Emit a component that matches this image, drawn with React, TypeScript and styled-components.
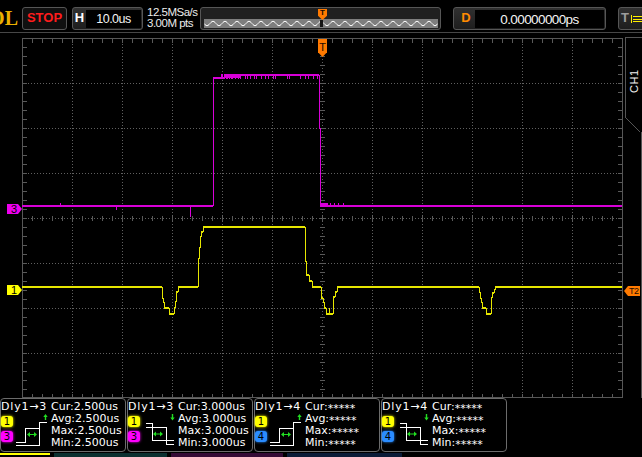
import styled, { createGlobalStyle } from "styled-components";

const GlobalStyle = createGlobalStyle`
  html, body { margin: 0; padding: 0; background: #000; }
  body { font-family: "Liberation Sans", Arial, sans-serif; }
`;

const Screen = styled.div`
  width: 642px;
  height: 457px;
  background: #000;
  color: #fff;
  overflow: hidden;
`;

/* ---------- top status bar ---------- */

const TopBar = styled.div`
  display: flex;
  align-items: flex-start;
  height: 33px;
  box-sizing: border-box;
  padding-top: 7px;
  border-bottom: 1px solid #474747;
`;

const Logo = styled.div`
  flex: none;
  width: 18px;
  height: 23px;
  overflow: hidden;
  display: flex;
  justify-content: flex-end;
  align-items: center;
  font-family: "Liberation Serif", serif;
  font-weight: 700;
  font-size: 20px;
  color: #ecb000;
  white-space: nowrap;
`;

const Box = styled.div<{ $w: number; $ml: number }>`
  flex: none;
  position: relative;
  width: ${(p) => p.$w}px;
  height: 23px;
  margin-left: ${(p) => p.$ml}px;
  box-sizing: border-box;
  border: 1px solid #565656;
  border-radius: 3px;
  background: linear-gradient(#303030, #1e1e1e);
  display: flex;
  align-items: center;
  overflow: hidden;
`;

const StopBox = styled(Box)`
  justify-content: center;
  padding-bottom: 3px;
  background: #101010;
  color: #ff1c1c;
  font-weight: 700;
  font-size: 13px;
`;

const BoxLabel = styled.span<{ $color: string; $w: number; $pad?: number }>`
  flex: none;
  width: ${(p) => p.$w}px;
  padding-left: ${(p) => p.$pad ?? 0}px;
  padding-bottom: 2px;
  box-sizing: border-box;
  text-align: center;
  font-weight: 700;
  font-size: 13px;
  color: ${(p) => p.$color};
`;

const Field = styled.div<{ $size: number; $ls: number }>`
  flex: 1;
  height: 18px;
  margin: 1px 1px 0 0;
  background: #000;
  display: flex;
  align-items: center;
  justify-content: center;
  font-size: ${(p) => p.$size}px;
  letter-spacing: ${(p) => p.$ls}px;
  color: #f4f4f4;
`;

const SampleInfo = styled.div`
  flex: none;
  width: 50px;
  margin-left: 4px;
  font-size: 11.5px;
  line-height: 10.7px;
  letter-spacing: -0.5px;
  color: #ececec;
  white-space: nowrap;
`;

const MemBox = styled(Box)`
  align-items: flex-end;
  padding: 0 2px 1px 3px;
  background: #202020;
`;

const MemStrip = styled.svg`
  display: block;
  width: 234px;
  height: 9px;
  background: #7e7e7e;
`;

const MemTrig = styled.div`
  position: absolute;
  left: 117px;
  top: 1px;
  width: 9px;
  height: 11px;
  background: #ff7a00;
  clip-path: polygon(0 0, 100% 0, 100% 62%, 50% 100%, 0 62%);
  color: #1a0a00;
  font-size: 8px;
  font-weight: 700;
  line-height: 8px;
  text-align: center;
`;

/* ---------- plot region ---------- */

const Middle = styled.div`
  display: flex;
  height: 365px;
`;

const Plot = styled.div`
  position: relative;
  flex: none;
  width: 625px;
  padding: 5px 0 0 22px;
  box-sizing: border-box;
`;

const Scope = styled.svg`
  display: block;
  overflow: visible;
`;

const ChMarker = styled.div<{ $color: string; $top: number }>`
  position: absolute;
  left: 7px;
  top: ${(p) => p.$top}px;
  width: 15px;
  height: 10px;
  box-sizing: border-box;
  padding-left: 4px;
  background: ${(p) => p.$color};
  clip-path: polygon(0 0, 11px 0, 15px 50%, 11px 100%, 0 100%);
  color: #000;
  font-size: 11px;
  line-height: 10px;
`;

const TopTrig = styled.div`
  position: absolute;
  left: 318px;
  top: 6px;
  width: 9px;
  height: 18px;
  background: #ff7a00;
  clip-path: polygon(0 0, 100% 0, 100% 74%, 50% 100%, 0 74%);
  color: #1a0a00;
  font-size: 11px;
  line-height: 17px;
  text-align: center;
`;

const SideTrig = styled.div`
  position: absolute;
  left: 624px;
  top: 253px;
  width: 16px;
  height: 10px;
  box-sizing: border-box;
  padding-left: 5px;
  background: #ff7a00;
  clip-path: polygon(0 50%, 4px 0, 100% 0, 100% 100%, 4px 100%);
  color: #1a0a00;
  font-size: 9px;
  line-height: 10px;
  letter-spacing: -0.5px;
`;

const SideTab = styled.div`
  flex: none;
  width: 17px;
  margin-top: 4px;
  display: flex;
  flex-direction: column;
`;

const TabHead = styled.div`
  height: 80px;
  box-sizing: border-box;
  border-top: 1px solid #555;
  border-left: 1px solid #555;
  display: flex;
  justify-content: center;
  padding-top: 30px;
`;

const TabText = styled.span`
  writing-mode: vertical-rl;
  transform: rotate(180deg);
  font-size: 11px;
  letter-spacing: 0.5px;
  color: #f0f0f0;
  height: 25px;
`;

const TabBevel = styled.div`
  width: 15px;
  height: 15px;
  background: linear-gradient(
    to top right,
    transparent calc(50% - 0.7px),
    #555 50%,
    transparent calc(50% + 0.7px)
  );
`;

const TabRail = styled.div`
  flex: 1;
  width: 16px;
  border-right: 1px solid #555;
`;

/* ---------- measurement panels ---------- */

const MeasureRow = styled.div`
  display: flex;
  gap: 1px;
  height: 54px;
`;

const Panel = styled.div`
  flex: none;
  position: relative;
  z-index: 1;
  width: 126px;
  height: 54px;
  box-sizing: border-box;
  border: 1px solid #6c6c6c;
  border-radius: 4px;
  background: #000;
  display: grid;
  grid-template-columns: 50px 1fr;
  font-family: "DejaVu Sans", sans-serif;
  font-size: 11px;
  color: #fff;
`;

const Left = styled.div`
  display: flex;
  flex-direction: column;
  padding-top: 1.5px;
`;

const DlyLabel = styled.div`
  height: 12px;
  line-height: 12px;
  white-space: nowrap;
  letter-spacing: 0.8px;
`;

const Diagram = styled.div`
  display: flex;
`;

const Badges = styled.div`
  flex: none;
  width: 14px;
  display: flex;
  flex-direction: column;
  gap: 4px;
  padding-top: 3.5px;
`;

const Badge = styled.div<{ $c: string }>`
  width: 12px;
  height: 11px;
  border-radius: 3px;
  background: ${(p) => p.$c};
  box-shadow: 0 0 3px ${(p) => p.$c};
  color: #000;
  font-size: 10px;
  line-height: 11px;
  text-align: center;
`;

const Values = styled.div`
  padding-top: 1.5px;
  line-height: 12.2px;
  white-space: nowrap;
`;

const Stars = styled.span`
  position: relative;
  top: 2px;
`;

const TabStrip = styled.div`
  display: flex;
  height: 4px;
  margin-top: 1px;
`;

const ChTab = styled.div<{ $w: number; $ml: number; $bg: string; $line?: string }>`
  flex: none;
  width: ${(p) => p.$w}px;
  margin-left: ${(p) => p.$ml}px;
  background: ${(p) => p.$bg};
  border-top: 2px solid ${(p) => p.$line ?? p.$bg};
`;

/* ---------- drawings ---------- */

type Pt = [number, number];
const OX = 22;
const OY = 38;

function segs(pts: Pt[]) {
  let h = "";
  let v = "";
  for (let i = 1; i < pts.length; i++) {
    const [x0, y0] = pts[i - 1];
    const [x1, y1] = pts[i];
    if (y0 === y1) h += `M${x0 - OX},${y0 - OY}H${x1 - OX}`;
    else v += `M${x0 - OX + 0.5},${y0 - OY}V${y1 - OY}`;
  }
  return { h, v };
}

function ticks(list: [number, number, number][]) {
  return list.map(([x, a, b]) => `M${x - OX + 0.5},${a - OY}V${b - OY}`).join("");
}

const ch1: Pt[] = [
  [22, 287], [162, 287], [162, 298], [163, 298], [163, 302], [164, 302], [164, 308],
  [169, 308], [169, 314], [174, 314], [174, 308], [175, 308], [175, 302], [176, 302],
  [176, 292], [178, 292], [178, 287], [198, 287], [198, 259], [199, 259], [199, 248],
  [200, 248], [200, 237], [201, 237], [201, 232], [203, 232], [203, 227], [305, 227],
  [305, 261], [306, 261], [306, 275], [309, 275], [309, 281], [312, 281], [312, 287],
  [321, 287], [321, 298], [323, 298], [323, 302], [324, 302], [324, 308], [326, 308],
  [326, 314], [333, 314], [333, 297], [335, 297], [335, 292], [337, 292], [337, 287],
  [479, 287], [479, 292], [480, 292], [480, 298], [481, 298], [481, 302], [482, 302],
  [482, 308], [486, 308], [486, 314], [491, 314], [491, 298], [492, 298], [492, 293],
  [494, 293], [494, 290], [495, 290], [495, 287], [622, 287],
];

const ch3: Pt[] = [
  [22, 206], [213, 206], [213, 78], [225, 78], [225, 75], [319, 75], [319, 128],
  [320, 128], [320, 206], [622, 206],
];

const ch3Noise: [number, number, number][] = [
  [60, 203, 206], [116, 206, 210], [190, 206, 217],
  ...[221, 222, 224, 226, 227, 229, 231, 232, 235, 238, 240, 245, 247, 250, 254, 256,
    261, 265, 268, 273, 275, 287, 289, 300, 305, 308, 313, 317].map(
    (x) => [x, 74, 79] as [number, number, number]
  ),
  [330, 203, 206], [334, 203, 206], [338, 203, 206], [343, 203, 206],
  [329, 314, 308],
];

function Graticule() {
  const W = 600;
  const H = 360;
  const dots: string[] = [];
  for (let k = 1; k < 12; k++) dots.push(`M${50 * k + 0.5},0V${H}`);
  for (let k = 1; k < 8; k++) dots.push(`M0,${45 * k + 0.5}H${W}`);
  const t: string[] = [];
  for (let x = 10; x < W; x += 10) {
    t.push(`M${x + 0.5},1v4`, `M${x + 0.5},${H}v-4`, `M${x + 0.5},178v5`);
  }
  for (let y = 9; y < H; y += 9) {
    t.push(`M1,${y + 0.5}h4`, `M${W},${y + 0.5}h-4`, `M298,${y + 0.5}h5`);
  }
  const y = segs(ch1);
  const m = segs(ch3);
  return (
    <Scope width={601} height={361} viewBox="0 0 601 361" shapeRendering="crispEdges">
      <path d={dots.join("")} stroke="#606060" strokeDasharray="1 2" fill="none" />
      <path d={t.join("")} stroke="#5a5a5a" fill="none" />
      <rect x={0.5} y={0.5} width={W} height={H - 1} fill="none" stroke="#575757" />
      <g fill="none" stroke="#d800d8">
        <path d={m.h} strokeWidth={2} />
        <path d={`M${226 - OX},${77 - OY}H${240 - OX}M${321 - OX},${204 - OY}H${328 - OX}`} strokeWidth={2} />
        <path d={m.v + ticks(ch3Noise.slice(0, -1))} strokeWidth={1} />
      </g>
      <g fill="none" stroke="#e6e600">
        <path d={y.h} strokeWidth={2} />
        <path d={y.v + ticks(ch3Noise.slice(-1))} strokeWidth={1} />
      </g>
    </Scope>
  );
}

function MemWave() {
  let d = "";
  for (let x = 0; x <= 234; x++) {
    const yy = 4.5 + 2.2 * Math.sin((2 * Math.PI * x) / 12);
    d += `${x === 0 ? "M" : "L"}${x},${yy.toFixed(2)}`;
  }
  return (
    <MemStrip viewBox="0 0 234 9">
      <path d={d} stroke="#fff" strokeWidth={1} fill="none" />
      <rect x={116} y={1} width={3} height={7} fill="#151515" />
    </MemStrip>
  );
}

function TrigIcon() {
  return (
    <svg width={12} height={10} viewBox="0 0 12 10" shapeRendering="crispEdges">
      <path d="M0.5,1V9M2,2.5H12M2,5H12M2,7.5H12" stroke="#ffee00" fill="none" />
    </svg>
  );
}

function StepIcon({ dir }: { dir: "up" | "down" }) {
  const white =
    dir === "up"
      ? "M1,29.5H10.5V15.5H24.5M1,32.5H24.5V9.5H32"
      : "M4,10.5H10.5V27.5H31.5M4,14.5H24.5V31.5H31.5";
  const ay = dir === "up" ? 21.5 : 21;
  const ax0 = dir === "up" ? 12 : 11;
  const ax1 = dir === "up" ? 22 : 21;
  return (
    <svg width={36} height={38} viewBox="0 0 36 38">
      <path d={white} stroke="#fff" strokeWidth={1} fill="none" shapeRendering="crispEdges" />
      <path d={`M${ax0 + 2},${ay}H${ax1 - 2}`} stroke="#22dd22" strokeWidth={1} />
      <path
        d={`M${ax0},${ay}l3,-2.5v5zM${ax1},${ay}l-3,-2.5v5z`}
        fill="#22dd22"
      />
      {dir === "up" ? (
        <path d="M30.5,1l2.2,3h-1.5v3h-1.4v-3h-1.5z" fill="#22dd22" />
      ) : (
        <path d="M30.5,7.5l2.2,-3h-1.5v-3.5h-1.4v3.5h-1.5z" fill="#22dd22" />
      )}
    </svg>
  );
}

const chColor: Record<string, string> = { "1": "#ffff00", "3": "#ff00ff", "4": "#2a8cff" };

const measures: { a: string; b: string; dir: "up" | "down"; val: string | null }[] = [
  { a: "1", b: "3", dir: "up", val: "2.500us" },
  { a: "1", b: "3", dir: "down", val: "3.000us" },
  { a: "1", b: "4", dir: "up", val: null },
  { a: "1", b: "4", dir: "down", val: null },
];

function MeasurePanel({ a, b, dir, val }: (typeof measures)[number]) {
  return (
    <Panel>
      <Left>
        <DlyLabel>
          Dly{a}→{b}
        </DlyLabel>
        <Diagram>
          <Badges>
            <Badge $c={chColor[a]}>{a}</Badge>
            <Badge $c={chColor[b]}>{b}</Badge>
          </Badges>
          <StepIcon dir={dir} />
        </Diagram>
      </Left>
      <Values>
        {["Cur:", "Avg:", "Max:", "Min:"].map((k) => (
          <div key={k}>
            {k}
            {val ?? <Stars>*****</Stars>}
          </div>
        ))}
      </Values>
    </Panel>
  );
}

export default function App() {
  return (
    <Screen>
      <GlobalStyle />
      <TopBar>
        <Logo>RIGOL</Logo>
        <StopBox $w={45} $ml={4}>STOP</StopBox>
        <Box $w={71} $ml={5}>
          <BoxLabel $color="#ffffff" $w={13}>H</BoxLabel>
          <Field $size={12.5} $ls={-0.5}>10.0us</Field>
        </Box>
        <SampleInfo>
          <div>12.5MSa/s</div>
          <div>3.00M pts</div>
        </SampleInfo>
        <MemBox $w={241} $ml={3}>
          <MemWave />
          <MemTrig>T</MemTrig>
        </MemBox>
        <Box $w={153} $ml={12}>
          <BoxLabel $color="#ff8a00" $w={21} $pad={3}>D</BoxLabel>
          <Field $size={13.5} $ls={-0.6}>0.00000000ps</Field>
        </Box>
        <Box $w={40} $ml={12}>
          <BoxLabel $color="#9c9c9c" $w={12}>T</BoxLabel>
          <TrigIcon />
        </Box>
      </TopBar>

      <Middle>
        <Plot>
          <Graticule />
          <ChMarker $color="#ee00ee" $top={171}>3</ChMarker>
          <ChMarker $color="#ffff00" $top={252}>1</ChMarker>
          <TopTrig>T</TopTrig>
          <SideTrig>T2</SideTrig>
        </Plot>
        <SideTab>
          <TabHead>
            <TabText>CH1</TabText>
          </TabHead>
          <TabBevel />
          <TabRail />
        </SideTab>
      </Middle>

      <MeasureRow>
        {measures.map((m, i) => (
          <MeasurePanel key={i} {...m} />
        ))}
      </MeasureRow>

      <TabStrip>
        <ChTab $w={50} $ml={0} $bg="#000" $line="#ffff00" />
        <ChTab $w={113} $ml={4} $bg="#0b3030" />
        <ChTab $w={112} $ml={4} $bg="#360b36" />
        <ChTab $w={115} $ml={4} $bg="#0b1c38" />
      </TabStrip>
    </Screen>
  );
}
